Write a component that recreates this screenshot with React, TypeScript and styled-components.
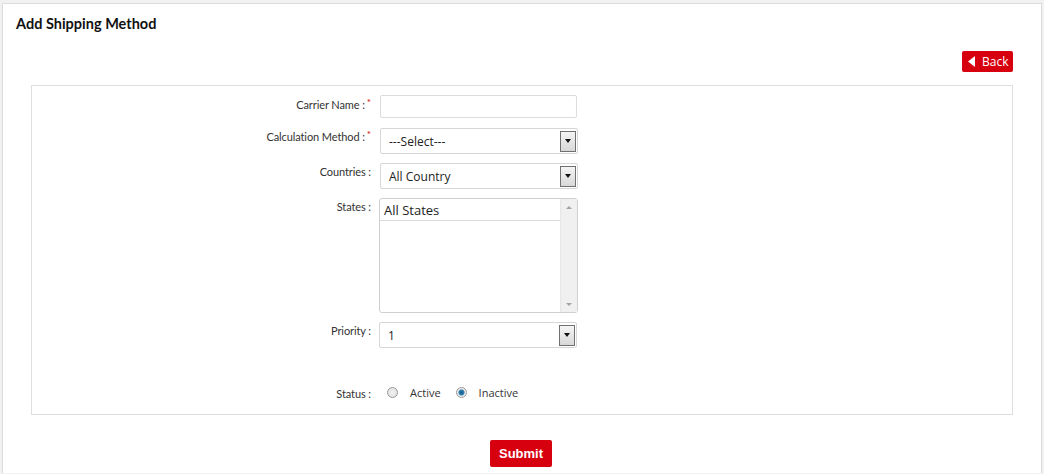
import React from "react";
import styled, { createGlobalStyle } from "styled-components";

const Global = createGlobalStyle`
  html, body { margin: 0; padding: 0; background: #f1f1f1; }
  body { font-family: Lato, "Open Sans", "Liberation Sans", sans-serif; color: #222; }
`;

const Panel = styled.div`
  margin: 3px 2px 0 2px;
  background: #fff;
  border: 1px solid #dcdcdc;
  border-bottom: none;
  min-height: 470px;
  box-sizing: border-box;
  padding: 12px 28px 0 28px;
`;

const Title = styled.h1`
  margin: 0 0 0 -15px;
  font-family: Lato, sans-serif;
  font-size: 14.5px;
  font-weight: 700;
  line-height: 16px;
  color: #111;
`;

const TopBar = styled.div`
  display: flex;
  justify-content: flex-end;
  margin-top: 19px;
`;

const BackButton = styled.button`
  display: flex;
  align-items: center;
  gap: 7px;
  height: 21px;
  width: 51px;
  padding: 0 0 0 6px;
  border: none;
  border-radius: 2px;
  background: #d7000f;
  color: #fff;
  font-family: "Open Sans", sans-serif;
  font-size: 12px;
  cursor: pointer;
`;

const FormBox = styled.div`
  margin-top: 13px;
  border: 1px solid #dedede;
  padding: 9px 0 0 0;
  height: 330px;
  box-sizing: border-box;
`;

const Row = styled.div<{ $mt?: number }>`
  display: grid;
  grid-template-columns: 340px 1fr;
  column-gap: 8px;
  margin-top: ${(p) => p.$mt ?? 0}px;
`;

const Label = styled.div<{ $pt?: number }>`
  text-align: right;
  font-family: Lato, sans-serif;
  font-size: 11px;
  color: #333;
  padding-top: ${(p) => p.$pt ?? 4}px;
  padding-right: 1px;
  white-space: nowrap;
  letter-spacing: -0.1px;
`;

const Req = styled.span`
  color: #d40000;
  font-size: 10px;
  vertical-align: top;
  margin-left: 2px;
  position: relative;
  top: -2px;
`;

const TextInput = styled.div`
  width: 197px;
  height: 23px;
  border: 1px solid #dcdcdc;
  border-radius: 2px;
  box-sizing: border-box;
  background: #fff;
`;

const SelectBox = styled.div<{ $ml?: number }>`
  width: 198px;
  height: 26px;
  margin-left: ${(p) => p.$ml ?? 0}px;
  border: 1px solid #d6d6d6;
  border-radius: 2px;
  box-sizing: border-box;
  display: flex;
  align-items: center;
  justify-content: space-between;
  padding: 0 1px 0 8px;
  font-family: "Open Sans", sans-serif;
  font-size: 12px;
  color: #222;
`;

const DropBtn = styled.span`
  width: 16px;
  height: 21px;
  box-sizing: border-box;
  border: 1px solid #707070;
  background: linear-gradient(#f4f4f4, #d8d8d8);
  display: flex;
  align-items: center;
  justify-content: center;
  &::after {
    content: "";
    border-left: 3.5px solid transparent;
    border-right: 3.5px solid transparent;
    border-top: 4px solid #111;
  }
`;

const ListBox = styled.div`
  margin-left: -1px;
  width: 199px;
  height: 115px;
  border: 1px solid #cfcfcf;
  border-radius: 3px;
  box-sizing: border-box;
  display: flex;
`;

const ListItems = styled.div`
  flex: 1;
`;

const ListItem = styled.div`
  font-family: "Open Sans", sans-serif;
  font-size: 13px;
  color: #222;
  padding: 2px 0 0 4px;
  height: 22px;
  box-sizing: border-box;
  border-bottom: 1px solid #dcdcdc;
`;

const ScrollBar = styled.div`
  width: 17px;
  background: #f0f0f0;
  border-left: 1px solid #e6e6e6;
  display: flex;
  flex-direction: column;
  justify-content: space-between;
  align-items: center;
  padding: 7px 0 6px;
  box-sizing: border-box;
`;

const Arrow = styled.span<{ $up?: boolean }>`
  width: 0;
  height: 0;
  border-left: 3px solid transparent;
  border-right: 3px solid transparent;
  ${(p) => (p.$up ? "border-bottom: 3px solid #a3a3a3;" : "border-top: 3px solid #a3a3a3;")}
`;

const RadioGroup = styled.div`
  display: flex;
  align-items: center;
  padding-top: 3px;
  padding-left: 7px;
  font-family: "Open Sans", sans-serif;
  font-size: 11px;
  color: #333;
`;

const RadioDot = styled.span<{ $checked?: boolean }>`
  width: 11px;
  height: 11px;
  border-radius: 50%;
  box-sizing: border-box;
  border: 1px solid #9a9a9a;
  background: ${(p) =>
    p.$checked
      ? "radial-gradient(circle, #1d5f8a 0, #2a7cb0 2.5px, #e9e9e9 3.5px, #f5f5f5 100%)"
      : "radial-gradient(circle, #f2f2f2 0, #dcdcdc 100%)"};
  margin-right: 12px;
`;

const RadioText = styled.span`
  margin-right: 15px;
`;

const SubmitRow = styled.div`
  display: flex;
  justify-content: center;
  margin-top: 25px;
`;

const SubmitButton = styled.button`
  width: 62px;
  height: 27px;
  border: none;
  border-radius: 2px;
  background: #d7000f;
  color: #fff;
  font-family: "Liberation Sans", Arial, sans-serif;
  font-weight: 700;
  font-size: 13px;
  cursor: pointer;
  margin-left: -2px;
`;

export default function App() {
  return (
    <>
      <Global />
      <Panel>
        <Title>Add Shipping Method</Title>
        <TopBar>
          <BackButton>
            <svg width="7" height="11" viewBox="0 0 7 11">
              <path d="M7 0 L0 5.5 L7 11 Z" fill="#fff" />
            </svg>
            Back
          </BackButton>
        </TopBar>
        <FormBox>
          <Row>
            <Label $pt={3}>
              Carrier Name :<Req>*</Req>
            </Label>
            <TextInput />
          </Row>
          <Row $mt={10}>
            <Label $pt={2}>
              Calculation Method :<Req>*</Req>
            </Label>
            <SelectBox>
              ---Select---
              <DropBtn />
            </SelectBox>
          </Row>
          <Row $mt={9}>
            <Label $pt={2}>Countries :</Label>
            <SelectBox>
              All Country
              <DropBtn />
            </SelectBox>
          </Row>
          <Row $mt={9}>
            <Label $pt={2}>States :</Label>
            <ListBox>
              <ListItems>
                <ListItem>All States</ListItem>
              </ListItems>
              <ScrollBar>
                <Arrow $up />
                <Arrow />
              </ScrollBar>
            </ListBox>
          </Row>
          <Row $mt={9}>
            <Label $pt={2}>Priority :</Label>
            <SelectBox $ml={-1}>
              1
              <DropBtn />
            </SelectBox>
          </Row>
          <Row $mt={34}>
            <Label $pt={5}>Status :</Label>
            <RadioGroup>
              <RadioDot />
              <RadioText>Active</RadioText>
              <RadioDot $checked />
              <RadioText>Inactive</RadioText>
            </RadioGroup>
          </Row>
        </FormBox>
        <SubmitRow>
          <SubmitButton>Submit</SubmitButton>
        </SubmitRow>
      </Panel>
    </>
  );
}
